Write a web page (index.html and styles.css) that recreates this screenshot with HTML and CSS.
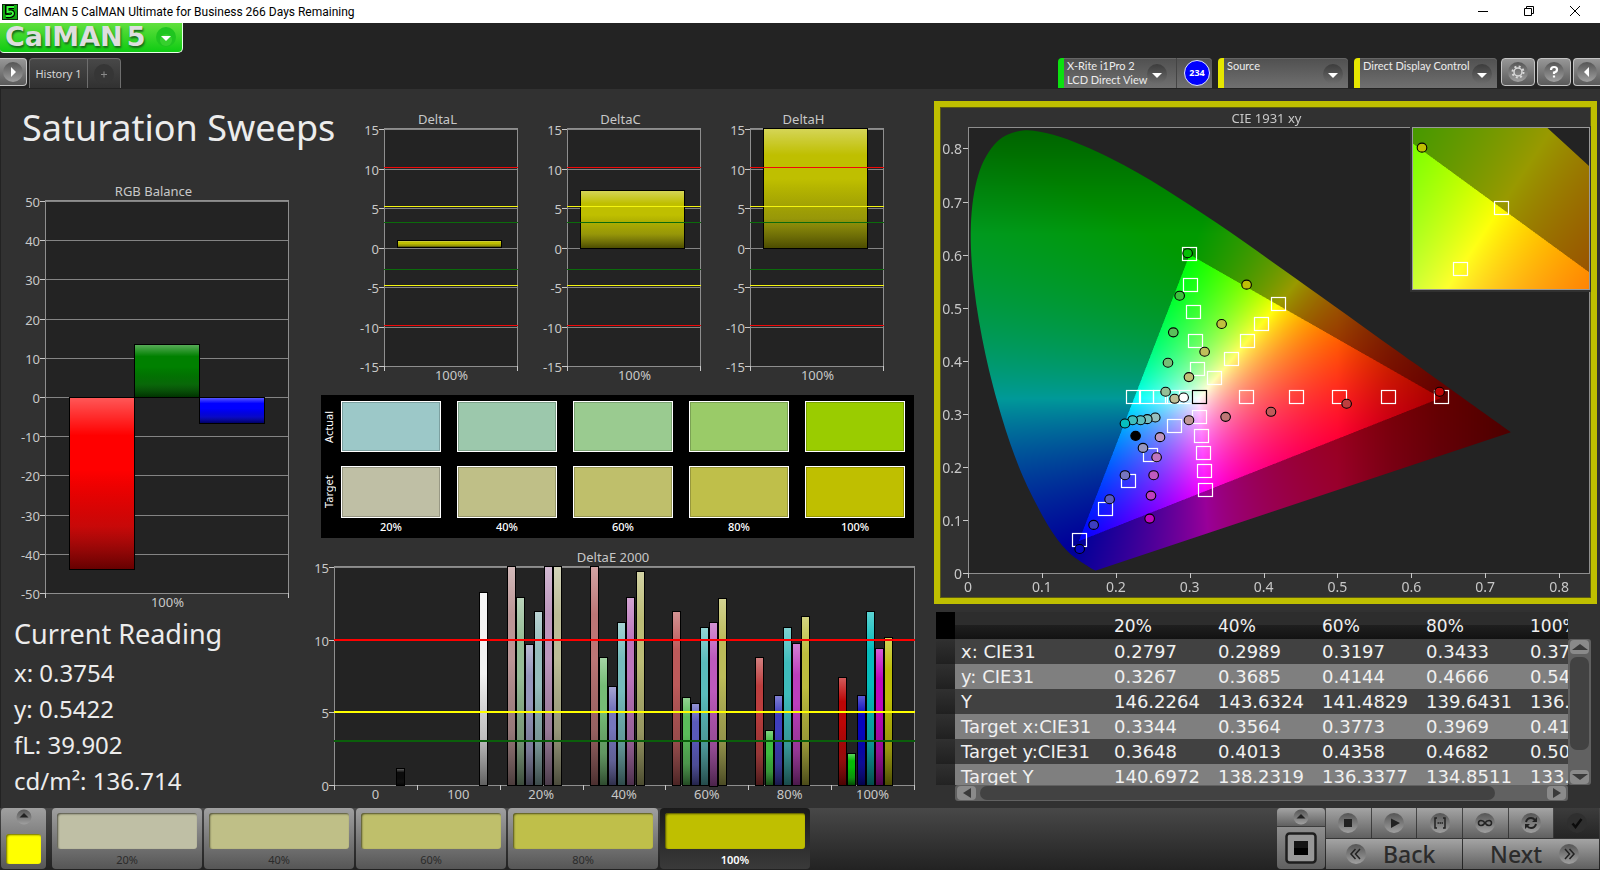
FILE: index.html
```html
<!DOCTYPE html>
<html lang="en">
<head>
<meta charset="utf-8">
<title>CalMAN 5</title>
<link rel="stylesheet" href="styles.css">
</head>
<body>
<header class="titlebar">
  <svg class="app-icon" width="16" height="16" viewBox="0 0 16 16"><rect width="16" height="16" fill="#0c2a0c"/><rect x="1" y="1" width="14" height="14" fill="#12a912"/><path d="M12 3H5v5q6-2 6 1.500T4 12" fill="none" stroke="#000" stroke-width="4"/><path d="M12 3H5.500v5q5.500-1.500 5.500 1.500T4 12" fill="none" stroke="#3dff3d" stroke-width="2"/></svg>
  <span class="app-title">CalMAN 5 CalMAN Ultimate for Business 266 Days Remaining</span>
  <div class="window-buttons">
    <button type="button" aria-label="Minimize"><svg width="10" height="10"><path d="M0 5.500h10" stroke="#000"/></svg></button>
    <button type="button" aria-label="Restore"><svg width="10" height="10" fill="none" stroke="#000"><path d="M.5 2.500h7v7h-7zM2.500 2.500v-2h7v7h-2"/></svg></button>
    <button type="button" aria-label="Close"><svg width="10" height="10"><path d="M0 0l10 10M10 0L0 10" stroke="#000"/></svg></button>
  </div>
</header>

<div class="toolbar">
  <button type="button" class="logo"><span>CalMAN</span><span>5</span>
    <svg width="20" height="20" viewBox="0 0 20 20"><circle cx="10" cy="10" r="10" fill="#1fc51f"/><circle cx="10" cy="13" r="6" fill="#4ddb3c" opacity=".5"/><path d="M5 9h10l-5 5z" fill="#fff"/></svg>
  </button>
  <div class="toolbar-row">
    <button type="button" class="chip chip-left" aria-label="Expand"><svg width="20" height="20" viewBox="0 0 20 20"><use href="#disc"/><path d="M8 5l5 5-5 5z" fill="#fff"/></svg></button>
    <div class="tabs">
      <button type="button" class="tab">History 1</button>
      <button type="button" class="tab tab-add" aria-label="Add history"><svg width="20" height="20" viewBox="0 0 20 20"><circle cx="10" cy="10" r="10" fill="#363636"/><path d="M7 10.500h6M10 7.500v6" stroke="#8a8a8a"/></svg></button>
    </div>
    <div class="devices">
      <div class="device device-meter green">
        <button type="button" class="device-name"><span>X-Rite i1Pro 2<br>LCD Direct View</span><svg width="20" height="20" viewBox="0 0 20 20"><use href="#disc-dark"/><path d="M5 9h10l-5 5z" fill="#fff"/></svg></button>
        <span class="badge">234</span>
      </div>
      <div class="device device-source"><button type="button" class="device-name"><span>Source</span><svg width="20" height="20" viewBox="0 0 20 20"><use href="#disc-dark"/><path d="M5 9h10l-5 5z" fill="#fff"/></svg></button></div>
      <div class="device device-display"><button type="button" class="device-name"><span>Direct Display Control</span><svg width="20" height="20" viewBox="0 0 20 20"><use href="#disc-dark"/><path d="M5 9h10l-5 5z" fill="#fff"/></svg></button></div>
      <button type="button" class="chip" aria-label="Settings"><svg width="20" height="20" viewBox="0 0 20 20"><use href="#disc"/><circle cx="10" cy="10" r="4" fill="none" stroke="#d8d8d8" stroke-width="1.500"/><circle cx="10" cy="10" r="5.500" fill="none" stroke="#d8d8d8" stroke-width="2" stroke-dasharray="2 2.320"/></svg></button>
      <button type="button" class="chip" aria-label="Help"><svg width="20" height="20" viewBox="0 0 20 20"><use href="#disc"/><path d="M7 8q0-3 3-3t3 2.500-3 3v1.500M10 13.500v2" fill="none" stroke="#fff" stroke-width="2.200"/></svg></button>
      <button type="button" class="chip chip-right" aria-label="Collapse"><svg width="20" height="20" viewBox="0 0 20 20"><use href="#disc"/><path d="M12 5l-5 5 5 5z" fill="#fff"/></svg></button>
    </div>
  </div>
</div>

<main class="workspace">
  <section class="col-left">
    <h1>Saturation Sweeps</h1>
    <div class="chart chart-rgb" id="rgb"></div>
    <h2>Current Reading</h2>
    <ul class="readings">
      <li>x: 0.3754</li><li>y: 0.5422</li><li>fL: 39.902</li><li>cd/m²: 136.714</li>
    </ul>
  </section>

  <section class="col-mid">
    <div class="delta-row">
      <div class="chart" id="deltaL"></div><div class="chart" id="deltaC"></div><div class="chart" id="deltaH"></div>
    </div>
    <div class="swatches">
      <span class="side">Actual</span><i class="a1"></i><i class="a2"></i><i class="a3"></i><i class="a4"></i><i class="a5"></i>
      <span class="side">Target</span><i class="t1"></i><i class="t2"></i><i class="t3"></i><i class="t4"></i><i class="t5"></i>
      <span></span><b>20%</b><b>40%</b><b>60%</b><b>80%</b><b>100%</b>
    </div>
    <div class="chart chart-de" id="deltaE"></div>
  </section>

  <section class="col-right">
    <div class="cie"><canvas id="gamut"></canvas><div class="chart chart-cie" id="cie"></div></div>
    <div class="data">
      <div class="data-clip">
        <table>
          <colgroup><col class="c-mark"><col class="c-label"><col><col><col><col><col></colgroup>
          <thead><tr><td></td><td></td><th scope="col">20%</th><th scope="col">40%</th><th scope="col">60%</th><th scope="col">80%</th><th scope="col">100%</th></tr></thead>
          <tbody>
            <tr><td></td><th scope="row">x: CIE31</th><td>0.2797</td><td>0.2989</td><td>0.3197</td><td>0.3433</td><td>0.3754</td></tr>
            <tr><td></td><th scope="row">y: CIE31</th><td>0.3267</td><td>0.3685</td><td>0.4144</td><td>0.4666</td><td>0.5422</td></tr>
            <tr><td></td><th scope="row">Y</th><td>146.2264</td><td>143.6324</td><td>141.4829</td><td>139.6431</td><td>136.7140</td></tr>
            <tr><td></td><th scope="row">Target x:CIE31</th><td>0.3344</td><td>0.3564</td><td>0.3773</td><td>0.3969</td><td>0.4193</td></tr>
            <tr><td></td><th scope="row">Target y:CIE31</th><td>0.3648</td><td>0.4013</td><td>0.4358</td><td>0.4682</td><td>0.5053</td></tr>
            <tr><td></td><th scope="row">Target Y</th><td>140.6972</td><td>138.2319</td><td>136.3377</td><td>134.8511</td><td>133.2000</td></tr>
          </tbody>
        </table>
      </div>
      <div class="vbar">
        <button type="button" aria-label="Scroll up"><svg width="16" height="6"><path d="M0 6l8-6 8 6z" fill="#3a3a3a"/></svg></button>
        <div class="thumb"></div>
        <button type="button" aria-label="Scroll down"><svg width="16" height="6"><path d="M0 0l8 6 8-6z" fill="#3a3a3a"/></svg></button>
      </div>
      <div class="hbar">
        <button type="button" aria-label="Scroll left"><svg width="8" height="10"><path d="M8 0v10L0 5z" fill="#3a3a3a"/></svg></button>
        <div class="thumb"></div>
        <button type="button" aria-label="Scroll right"><svg width="8" height="10"><path d="M0 0v10l8-5z" fill="#3a3a3a"/></svg></button>
      </div>
    </div>
  </section>
</main>

<footer class="dock">
  <button type="button" class="current" aria-label="Current pattern"><svg width="16" height="16" viewBox="0 0 16 16"><use href="#disc-small"/><path d="M3.500 8.500h9L8 4z" fill="#222"/></svg><i></i></button>
  <div class="tiles">
    <button type="button" class="tile"><i class="t1"></i>20%</button>
    <button type="button" class="tile"><i class="t2"></i>40%</button>
    <button type="button" class="tile"><i class="t3"></i>60%</button>
    <button type="button" class="tile"><i class="t4"></i>80%</button>
    <button type="button" class="tile active"><i class="t5"></i>100%</button>
  </div>
  <div class="controls">
    <div class="source-col">
      <button type="button" aria-label="Show patterns"><svg width="16" height="16" viewBox="0 0 16 16"><use href="#disc-small"/><path d="M3.500 9.500h9L8 5z" fill="#222"/></svg></button>
      <button type="button" class="pattern" aria-label="Pattern window"><svg width="32" height="32" viewBox="0 0 32 32"><rect x="1.500" y="1.500" width="29" height="29" rx="3" fill="#979797" stroke="#1e1e1e" stroke-width="2.500"/><path d="M9 9h14v14H9z" fill="#000"/><path d="M9 9h14v7H9z" fill="#151515"/></svg></button>
    </div>
    <div class="transport">
      <button type="button" aria-label="Stop"><svg width="20" height="20" viewBox="0 0 20 20"><use href="#disc"/><path d="M6 6h8v8H6z" fill="#222"/></svg></button>
      <button type="button" aria-label="Play"><svg width="20" height="20" viewBox="0 0 20 20"><use href="#disc"/><path d="M7 5.500l9 4.500-9 5z" fill="#222"/></svg></button>
      <button type="button" aria-label="Read series"><svg width="20" height="20" viewBox="0 0 20 20"><use href="#disc"/><path d="M7 5H5v10h2M13 5h2v10h-2M7.500 10h1.500M9.500 10h1.500M11.500 10h1.500" fill="none" stroke="#222" stroke-width="1.500"/></svg></button>
      <button type="button" aria-label="Read continuously"><svg width="20" height="20" viewBox="0 0 20 20"><use href="#disc"/><path d="M10 10C8 7 3.500 6.500 3.500 10s4.500 3 6.500 0 6.500-3.500 6.500 0-4.500 3-6.500 0z" fill="none" stroke="#222" stroke-width="1.600"/></svg></button>
      <button type="button" aria-label="Repeat"><svg width="20" height="20" viewBox="0 0 20 20"><use href="#disc"/><path d="M5 9q1-4 5-4 2.500 0 4 2M15 11q-1 4-5 4-2.500 0-4-2" fill="none" stroke="#222" stroke-width="2"/><path d="M16 4v5h-5zM4 16v-5h5z" fill="#222"/></svg></button>
      <button type="button" class="off" aria-label="Accept"><svg width="20" height="20" viewBox="0 0 20 20"><circle cx="10" cy="10" r="10" fill="#2f2f2f"/><path d="M5.500 10.500l3 3.500 6-8" fill="none" stroke="#0c0c0c" stroke-width="2.500"/></svg></button>
      <button type="button" class="nav"><svg width="20" height="20" viewBox="0 0 20 20"><use href="#disc"/><path d="M9.500 5l-4.500 5 4.500 5M14 5l-4.500 5 4.500 5" fill="none" stroke="#222" stroke-width="1.500"/></svg>Back</button>
      <button type="button" class="nav nav-next">Next<svg width="20" height="20" viewBox="0 0 20 20"><use href="#disc"/><path d="M6 5l4.500 5L6 15M10.500 5l4.500 5-4.500 5" fill="none" stroke="#222" stroke-width="1.500"/></svg></button>
    </div>
  </div>
</footer>

<svg class="defs" aria-hidden="true">
  <defs>
    <linearGradient id="g-disc" x2="0" y2="1"><stop offset="0" stop-color="#555"/><stop offset="1" stop-color="#a0a0a0"/></linearGradient>
    <linearGradient id="g-dark" x2="0" y2="1"><stop offset="0" stop-color="#3c3c3c"/><stop offset="1" stop-color="#6c6c6c"/></linearGradient>
    <linearGradient id="gloss" x2="0" y2="1"><stop offset="0" stop-color="#fff" stop-opacity=".34"/><stop offset=".22" stop-color="#fff" stop-opacity="0"/><stop offset=".42" stop-color="#000" stop-opacity="0"/><stop offset=".75" stop-color="#222" stop-opacity=".25"/><stop offset="1" stop-color="#000" stop-opacity=".6"/></linearGradient>
    <circle id="disc" cx="10" cy="10" r="10" fill="url(#g-disc)"/>
    <circle id="disc-dark" cx="10" cy="10" r="10" fill="url(#g-dark)"/>
    <circle id="disc-small" cx="8" cy="8" r="7.500" fill="url(#g-disc)"/>
  </defs>
</svg>
<script src="charts.js"></script>
</body>
</html>
```

FILE: styles.css
```css
* { box-sizing: border-box; }
body {
  margin: 0;
  min-height: 100vh;
  display: flex;
  flex-direction: column;
  background: #232323;
  color: #ececec;
  font-family: "Noto Sans", "Open Sans", sans-serif;
  overflow-x: hidden;
}
button {
  margin: 0;
  padding: 0;
  border: 0;
  background: none;
  color: inherit;
  font: inherit;
  cursor: pointer;
}
svg, canvas { display: block; }
.defs { position: absolute; width: 0; height: 0; }

/* window title bar */
.titlebar {
  height: 23px;
  display: flex;
  align-items: center;
  background: #fff;
  color: #000;
  padding-left: 2px;
}
.app-title {
  margin-left: 6px;
  font: 12px/16px Roboto, sans-serif;
}
.window-buttons { margin: 0 2px 2px auto; display: flex; }
.window-buttons button { width: 46px; height: 20px; display: grid; place-items: center; }

/* logo, tabs and devices */
.toolbar { height: 66px; }
.logo {
  width: 183px;
  height: 30px;
  display: flex;
  align-items: center;
  padding: 0 6px 2px 5px;
  border: solid #e8ffe8;
  border-width: 0 1px 1px 0;
  border-radius: 0 0 5px 4px;
  background: linear-gradient(#62e03e, #0ecb12);
  color: #dedede;
  font: bold 27px/26px "DejaVu Sans", sans-serif;
  text-shadow: 1px 2px 2px #17691a;
}
.logo span + span { margin-left: 4px; }
.logo svg { margin-left: auto; }
.toolbar-row {
  display: flex;
  align-items: flex-start;
  margin-top: 5px;
  height: 31px;
  overflow: hidden;
}
.chip {
  width: 34px;
  height: 28px;
  display: grid;
  place-items: center;
  border: 1px solid #c4c4c4;
  border-radius: 4px;
  background: linear-gradient(#979797, #5a5a5a);
}
.chip-left { width: 27px; border-left: 0; border-radius: 0 4px 4px 0; }
.chip-right { width: 27px; border-right: 0; border-radius: 4px 0 0 4px; }
.tabs {
  display: flex;
  margin-left: 2px;
  height: 30px;
  border: solid #6e6e6e;
  border-width: 1px 1px 0;
  border-radius: 4px 4px 0 0;
  background: linear-gradient(#484848, #313131);
}
.tab {
  width: 58px;
  font-size: 11px;
  color: #d6d6d6;
  border-right: 1px solid #6e6e6e;
}
.tab-add { width: 32px; border-right: 0; display: grid; place-items: center; }
.devices { margin-left: auto; display: flex; gap: 2px; }
.device {
  height: 30px;
  display: flex;
  margin-right: 4px;
  border-left: 6px solid #e6e600;
  border-radius: 4px 4px 0 0;
  background: linear-gradient(#505050, #707070);
  box-shadow: inset 0 1px #666;
}
.device.green { border-left-color: #0ce010; }
.device-meter { width: 154px; }
.device-source { width: 130px; }
.device-display { width: 143px; margin-right: 2px; }
.device-name {
  flex: 1;
  display: flex;
  justify-content: space-between;
  padding: 1px 9px 0 3px;
  font: 11px/14px Lato, sans-serif;
  text-align: left;
  white-space: nowrap;
}
.device-display .device-name, .device-source .device-name { padding-right: 5px; }
.device-name svg { align-self: center; margin-left: -8px; }
.badge {
  width: 26px;
  height: 26px;
  margin: 2px;
  border: 1px solid #dfe4ff;
  border-radius: 50%;
  background: #0000fe;
  color: #fff;
  font: bold 9px/24px "Open Sans", sans-serif;
  text-align: center;
}
.device-meter .device-name { border-right: 1px solid #444; margin-right: 5px; }

/* workspace */
.workspace {
  flex: 1;
  display: grid;
  grid-template-columns: 313fr 607fr 680fr;
  background: #313131;
  box-shadow: inset 1px 0 #222;
}
.workspace > section { min-width: 0; }
.chart { position: relative; min-width: 0; }
.chart svg { width: 100%; height: 100%; font-size: 13px; fill: #c8c8c8; overflow: visible; }
.chart .axis-cie { font-size: 14px; }

.col-left h1 {
  margin: 0 0 32px;
  padding: 16px 0 0 22px;
  font-size: 36px;
  line-height: 46px;
  font-weight: 400;
  white-space: nowrap;
}
.chart-rgb { height: 430px; }
.col-left h2 {
  margin: 0;
  padding-left: 14px;
  font-size: 27px;
  line-height: 42px;
  font-weight: 400;
}
.readings {
  margin: 0;
  padding: 0 0 0 14px;
  list-style: none;
  font-size: 24px;
  line-height: 36px;
}

.col-mid { padding-top: 20px; }
.delta-row {
  display: grid;
  grid-template-columns: repeat(3, 1fr);
  height: 277px;
  margin: 0 25px 0 33px;
}
.swatches {
  display: grid;
  grid-template-columns: 4px repeat(5, 1fr);
  grid-template-rows: 51px 52px 18px;
  column-gap: 16px;
  row-gap: 14px;
  margin: 9px 6px 9px 8px;
  padding: 6px 9px 0 0;
  height: 143px;
  background: #000;
  color: #fff;
  font-size: 11px;
}
.swatches i { border: 1px solid #fff; box-shadow: inset 0 0 0 1px rgba(0, 0, 0, .2); }
.swatches b { font-weight: 500; line-height: 16px; text-align: center; margin-top: -13px; }
.side {
  writing-mode: vertical-rl;
  transform: rotate(180deg);
  text-align: center;
  width: 12px;
  margin-left: 2px;
  line-height: 12px;
}
.a1 { background: #9cc8c8; }
.a2 { background: #9cc8ac; }
.a3 { background: #9acb90; }
.a4 { background: #9acb68; }
.a5 { background: #9acc00; }
.t1 { background: #bfbfa5; }
.t2 { background: #bfbf87; }
.t3 { background: #bfbf6b; }
.t4 { background: #bfbf4a; }
.t5 { background: #bfbf00; }
.chart-de { height: 254px; }

.cie {
  position: relative;
  height: 503px;
  margin: 12px 3px 8px 14px;
  border: 6px solid #bfbf00;
  box-shadow: inset 0 0 0 1px #5c5c12;
}
.cie canvas { position: absolute; left: 0; top: 0; }
.chart-cie { height: 491px; }

/* readings table */
.data {
  display: grid;
  grid-template-columns: 1fr 23px;
  margin: 0 9px 7px 16px;
}
.data-clip { height: 173px; overflow: hidden; }
table {
  width: 692px;
  table-layout: fixed;
  border-collapse: collapse;
  font: 18px/25px "DejaVu Sans", sans-serif;
  color: #f0f0f0;
}
.c-mark { width: 19px; }
.c-label { width: 153px; }
th, td { padding: 0 0 0 6px; height: 25px; font-weight: 400; text-align: left; white-space: nowrap; }
thead th, thead td {
  height: 27px;
  padding-top: 2px;
  font-size: 17px;
  background: linear-gradient(#2d2d2d 48%, #1f1f1f 48%, #121212);
}
thead td:first-child { background: #000; }
tbody tr { background: #414141; }
tbody tr:nth-child(even) { background: #7f7f7f; }
tbody td:first-child { background: linear-gradient(#303030, #202020); }
.vbar, .hbar { display: flex; background: #616161; border-radius: 3px; }
.vbar { flex-direction: column; align-items: center; margin-top: 27px; padding: 1px; }
.vbar button, .hbar button {
  display: grid;
  place-items: center;
  width: 19px;
  height: 14px;
  flex: none;
  border-radius: 4px;
  background: #8a8a8a;
}
.vbar .thumb { width: 19px; height: 93px; margin: 3px 0 auto; border-radius: 7px; background: #424242; }
.hbar { height: 16px; margin-left: 19px; padding: 1px 2px; }
.hbar .thumb { flex: 516; margin: 0 52px 0 4px; border-radius: 7px; background: #424242; }

/* bottom dock */
.dock {
  height: 62px;
  display: flex;
  padding: 0 1px 1px;
  background: linear-gradient(#484848, #222);
}
.dock i { display: block; border-radius: 3px; box-shadow: inset 1px 1px 2px rgba(0, 0, 0, .6); }
.current, .tile {
  display: flex;
  flex-direction: column;
  align-items: center;
  border-radius: 4px;
  background: linear-gradient(#a0a0a0, #565656);
}
.current { width: 45px; padding-top: 1px; }
.current i { width: 35px; height: 30px; margin-top: 9px; background: #ff0; }
.tiles { display: flex; gap: 2px; margin-left: 6px; }
.tile {
  width: 150px;
  padding: 5px 5px 0;
  color: #2b2b2b;
  font: 11px/16px "Noto Sans", sans-serif;
}
.tile i { width: 100%; height: 36px; margin-bottom: 3px; }
.tile.active { background: linear-gradient(#1a1a1a, #3a3a3a); color: #fff; font-weight: 600; }
.controls { margin-left: auto; display: flex; gap: 1px; }
.controls button { background: linear-gradient(#a4a4a4, #606060); display: grid; place-items: center; }
.source-col { width: 48px; display: grid; grid-template-rows: 18px 1fr; gap: 1px; border-radius: 4px; overflow: hidden; }
.controls .pattern { background: linear-gradient(#8e8e8e, #606060); }
.transport {
  width: 273px;
  display: grid;
  grid-template-columns: repeat(6, 1fr);
  grid-template-rows: 30px 30px;
  gap: 1px;
}
.controls .off { background: linear-gradient(#3c3c3c, #252525); }
.controls .nav {
  grid-column: span 3;
  display: flex;
  align-items: center;
  gap: 17px;
  padding: 0 20px;
  color: #2b2b2b;
  font: 500 23px/28px "Noto Sans", sans-serif;
}
.controls .nav-next { justify-content: flex-end; }
```

FILE: charts.js
```js
const NS = 'http://www.w3.org/2000/svg';

function surface(id) {
  const host = document.getElementById(id);
  host.textContent = '';
  const svg = document.createElementNS(NS, 'svg');
  host.appendChild(svg);
  return { svg, w: host.clientWidth, h: host.clientHeight };
}
function add(parent, tag, attrs, text) {
  const el = document.createElementNS(NS, tag);
  for (const k in attrs) el.setAttribute(k, attrs[k]);
  if (text !== undefined) el.textContent = text;
  parent.appendChild(el);
  return el;
}
function hline(svg, x1, x2, y, color, width) {
  add(svg, 'path', { d: `M${x1} ${y}H${x2}`, stroke: color, 'stroke-width': width || 1, fill: 'none' });
}
const snap = v => Math.round(v) + 0.5;

function barChart(id, o) {
  const { svg, w, h } = surface(id);
  const L = o.left, R = w - o.right, T = o.top, B = h - o.bottom;
  const sy = v => B - (v - o.min) / (o.max - o.min) * (B - T);
  add(svg, 'rect', { x: L, y: T - 1, width: R - L, height: B - T + 1, fill: '#232323' });
  for (let v = o.min; v <= o.max; v += o.step) {
    const y = snap(sy(v));
    hline(svg, L - 5, L, y, '#c8c8c8');
    hline(svg, L, R, y, '#848484');
    add(svg, 'text', { x: L - 5, y: y + 5, 'text-anchor': 'end' }, v);
  }
  add(svg, 'rect', { x: L + .5, y: T - .5, width: Math.round(R - L), height: B - T + 1, fill: 'none', stroke: '#8e8e8e' });
  const band = (R - L) / o.groups.length;
  o.groups.forEach((g, i) => {
    g.bars.forEach(b => {
      const x = Math.round(L + band * (i + b.x)), bw = Math.round(band * o.bar);
      const y0 = sy(0), y1 = Math.max(T - 1, sy(b.v));
      const y = Math.round(Math.min(y0, y1)), bh = Math.round(Math.abs(y0 - y1));
      add(svg, 'rect', { x: x + .5, y: y + .5, width: bw, height: bh, fill: b.c, stroke: '#000' });
      add(svg, 'rect', { x: x + 1, y: y + 1, width: bw - 1, height: bh - 1, fill: 'url(#gloss)' });
    });
    add(svg, 'text', { x: L + band * (i + .5) + o.shift, y: B + 14, 'text-anchor': 'middle' }, g.name);
  });
  for (let i = 0; i <= o.groups.length; i++)
    add(svg, 'path', { d: `M${snap(L + band * i)} ${B}v5`, stroke: '#c8c8c8' });
  (o.limits || []).forEach(([v, c]) => hline(svg, L, R + 1, Math.round(sy(v)) - (o.limitWidth === 1 ? 1.5 : 0), c, o.limitWidth));
  add(svg, 'text', { x: o.titleX ? o.titleX(L, R) : (L + R) / 2, y: T - 5, 'text-anchor': 'middle' }, o.title);
}

const deltaLimits = [[10, '#f00808'], [5, '#f4f410'], [3, '#0b6b0b'], [-3, '#0b6b0b'], [-5, '#f4f410'], [-10, '#f00808']];
function deltaChart(id, title, v) {
  barChart(id, { title, left: 38, right: 12, top: 20, bottom: 20, min: -15, max: 15, step: 5, bar: .78, limitWidth: 1, shift: 1,
    limits: deltaLimits, titleX: (l, r) => (l + r) / 2 - 13, groups: [{ name: '100%', bars: [{ x: .1, v, c: '#bfbf00' }] }] });
}

const weak = [150, 118, 90, 62, 6];
const hues = ['100', '010', '001', '011', '101', '110'];
function shade(hue, level, high) {
  return 'rgb(' + [...hue].map(c => c === '1' ? high || 188 : weak[level]).join() + ')';
}
const errors = [
  [16, 12.97, 9.67, 12, 16, 16],
  [16, 8.84, 6.78, 11.2, 12.97, 14.7],
  [11.94, 6.07, 5.66, 10.84, 11.25, 12.9],
  [8.84, 3.8, 6.16, 10.9, 9.8, 11.6],
  [7.4, 2.17, 6.16, 12, 9.4, 10.2]
];
const slot = k => .085 + .111 * k;

const locus = [[.1741,.005],[.1726,.0048],[.1689,.0069],[.1644,.0109],[.1566,.0177],[.144,.0297],[.1355,.0399],[.1241,.0578],[.1096,.0868],[.0913,.1327],[.0687,.2007],[.0454,.295],[.0235,.4127],[.0082,.5384],[.0039,.6548],[.0139,.7502],[.0389,.812],[.0743,.8338],[.1142,.8262],[.1547,.8059],[.1929,.7816],[.2296,.7543],[.2658,.7243],[.3016,.6923],[.3373,.6589],[.3731,.6245],[.4087,.5896],[.4441,.5547],[.4788,.5202],[.5125,.4866],[.5448,.4544],[.5752,.4242],[.6029,.3965],[.627,.3725],[.6482,.3514],[.6658,.334],[.6915,.3083],[.714,.2859],[.7347,.2653]];

const targets = [[.299,.602],[.301,.543],[.3045,.492],[.3067,.437],[.31,.385],[.3333,.3673],[.3559,.4025],[.3771,.437],[.3965,.4686],[.4195,.5075],[.2233,.3308],[.2413,.3308],[.2594,.3308],[.2765,.3308],[.2945,.3308],[.3757,.3308],[.4443,.3308],[.5025,.3308],[.5679,.3308],[.6401,.3308],[.313,.2943],[.3153,.2585],[.3176,.2264],[.3189,.1925],[.3203,.1566],[.2792,.2767],[.2463,.2226],[.2165,.173],[.1849,.1208],[.1498,.0616]];
const measured = {
  '010': [[.2661,.3415],[.2693,.3962],[.2765,.4535],[.2851,.5226],[.2959,.6025]],
  '110': [[.2783,.3283],[.2977,.3692],[.3189,.417],[.3419,.4692],[.3757,.5434]],
  '011': [[.2521,.2931],[.2413,.2899],[.2323,.288],[.2215,.288],[.2111,.2818]],
  '100': [[.2977,.288],[.3473,.2943],[.4087,.3038],[.5111,.3189],[.6369,.3415]],
  '101': [[.2585,.256],[.2539,.2182],[.2499,.1843],[.2463,.1459],[.2445,.1025]],
  '001': [[.2355,.2358],[.2111,.1843],[.1903,.139],[.1687,.0906],[.1498,.0453]]
};

function ramp(v, stops) {
  for (let i = 1; i < stops.length; i++) {
    if (v <= stops[i][0]) {
      const [a, fa] = stops[i - 1], [b, fb] = stops[i];
      return v <= a ? fa : fa + (fb - fa) * (v - a) / (b - a);
    }
  }
  return stops[stops.length - 1][1];
}

/* chromaticity to display colour; out-of-gamut colours are clipped and dimmed */
function chroma(x, y) {
  y = Math.max(y, .001);
  const X = x / y, Z = (1 - x - y) / y;
  const c = [3.2406 * X - 1.5372 - .4986 * Z, -.9689 * X + 1.8758 + .0415 * Z, .0557 * X - .204 + 1.057 * Z];
  const out = Math.min(...c) < 0;
  const m = Math.max(...c);
  let k = 255 / m * (out ? .6 : 1);
  k *= ramp(x, [[.5, 1], [.57, .8], [.64, .65], [.735, .5]]);
  k *= ramp(y, [[.64, 1], [.84, .64]]);
  return c.map(v => Math.max(0, v) * k);
}
/* smooth closed outline: Catmull-Rom through the points, straight closing edge */
function traceLocus(ctx, pts) {
  ctx.beginPath();
  ctx.moveTo(...pts[0]);
  for (let i = 0; i < pts.length - 1; i++) {
    const a = pts[Math.max(0, i - 1)], b = pts[i], c = pts[i + 1], d = pts[Math.min(pts.length - 1, i + 2)];
    ctx.bezierCurveTo(b[0] + (c[0] - a[0]) / 6, b[1] + (c[1] - a[1]) / 6, c[0] - (d[0] - b[0]) / 6, c[1] - (d[1] - b[1]) / 6, c[0], c[1]);
  }
  ctx.closePath();
}
function paint(ctx, box, range) {
  const s = 2, w = Math.round(box.w * s), h = Math.round(box.h * s);
  const off = document.createElement('canvas');
  off.width = w; off.height = h;
  const o = off.getContext('2d'), img = o.createImageData(w, h);
  for (let j = 0, p = 0; j < h; j++) for (let i = 0; i < w; i++, p += 4) {
    const c = chroma(range.x0 + (i + .5) / w * (range.x1 - range.x0), range.y1 - (j + .5) / h * (range.y1 - range.y0));
    img.data[p] = c[0]; img.data[p + 1] = c[1]; img.data[p + 2] = c[2]; img.data[p + 3] = 255;
  }
  o.putImageData(img, 0, 0);
  ctx.save();
  ctx.fillStyle = '#232323';
  ctx.fillRect(box.x, box.y, box.w, box.h);
  ctx.beginPath(); ctx.rect(box.x, box.y, box.w, box.h); ctx.clip();
  traceLocus(ctx, locus.map(([x, y]) => [box.x + (x - range.x0) / (range.x1 - range.x0) * box.w, box.y + (range.y1 - y) / (range.y1 - range.y0) * box.h]));
  ctx.clip();
  ctx.drawImage(off, box.x, box.y, box.w, box.h);
  ctx.restore();
}

function cieChart() {
  const { svg, w, h } = surface('cie');
  const box = { x: 28, y: 20, w: w - 30, h: h - 45 };
  const range = { x0: 0, x1: .8405, y0: 0, y1: .8405 };
  const canvas = document.getElementById('gamut');
  canvas.width = w; canvas.height = h;
  const ctx = canvas.getContext('2d');
  paint(ctx, box, range);
  const px = x => box.x + x / range.x1 * box.w, py = y => box.y + box.h - y / range.y1 * box.h;
  add(svg, 'rect', { x: box.x + .5, y: box.y + .5, width: box.w, height: box.h, fill: 'none', stroke: '#8e8e8e' });
  const axis = add(svg, 'g', { class: 'axis-cie' });
  for (let i = 0; i <= 8; i++) {
    const t = i ? (i / 10).toFixed(1) : '0';
    hline(svg, box.x - 5, box.x, snap(py(i / 10)), '#c8c8c8');
    add(svg, 'path', { d: `M${snap(px(i / 10))} ${box.y + box.h}v5`, stroke: '#c8c8c8' });
    add(axis, 'text', { x: box.x - 6, y: py(i / 10) + 6, 'text-anchor': 'end' }, t);
    add(axis, 'text', { x: px(i / 10), y: box.y + box.h + 19, 'text-anchor': 'middle' }, t);
  }
  add(svg, 'text', { x: w / 2 + 1, y: 16, 'text-anchor': 'middle' }, 'CIE 1931 xy');
  const square = (x, y, c) => add(svg, 'rect', { x: Math.round(x) - 6.5, y: Math.round(y) - 6.5, width: 14, height: 13, fill: 'none', stroke: c || '#fff', 'stroke-width': 1.2 });
  const dot = (x, y, c) => add(svg, 'ellipse', { cx: x + 1, cy: y, rx: 4.8, ry: 4.5, fill: c, stroke: '#000', 'stroke-width': 1.1 });
  targets.forEach(([x, y]) => square(px(x), py(y)));
  square(px(.3121), py(.3308), '#000');
  dot(px(.2255), py(.2585), '#000');
  for (const hue in measured) measured[hue].forEach(([x, y], i) => dot(px(x), py(y), shade(hue, i, 191)));
  dot(px(.2905), py(.3308), '#fff');

  const zoom = { x: box.x + box.w - 177, y: box.y, w: 177, h: 162 };
  const zr = { x0: .3701, x1: .4685, y0: .456, y1: .554 };
  ctx.fillStyle = '#313131';
  ctx.fillRect(zoom.x - 2, zoom.y - 1, zoom.w + 5, zoom.h + 4);
  paint(ctx, zoom, zr);
  add(svg, 'path', { d: `M${zoom.x - 2} ${zoom.y + .5}h2M${box.x + box.w + .5} ${zoom.y + zoom.h + 1}v2`, stroke: '#313131' });
  add(svg, 'rect', { x: zoom.x + .5, y: zoom.y + .5, width: zoom.w, height: zoom.h, fill: 'none', stroke: '#9a9a9a' });
  const zx = x => zoom.x + (x - zr.x0) / (zr.x1 - zr.x0) * zoom.w, zy = y => zoom.y + (zr.y1 - y) / (zr.y1 - zr.y0) * zoom.h;
  square(zx(.4193), zy(.505));
  square(zx(.3969), zy(.4678));
  dot(zx(.3751), zy(.5415), '#bfbf00');
}

function draw() {
  barChart('rgb', { title: 'RGB Balance', left: 45, right: 25, top: 18, bottom: 20, min: -50, max: 50, step: 10, bar: .266, shift: 1,
    titleX: (l, r) => (l + r) / 2 - 13,
    groups: [{ name: '100%', bars: [{ x: .1, v: -43.9, c: '#f00' }, { x: .368, v: 13.6, c: '#008000' }, { x: .634, v: -6.6, c: '#00f' }] }] });
  deltaChart('deltaL', 'DeltaL', .9);
  deltaChart('deltaC', 'DeltaC', 7.3);
  deltaChart('deltaH', 'DeltaH', 20);
  const groups = [
    { name: '0', bars: [{ x: slot(6), v: 1.2, c: '#0c0c0c' }] },
    { name: '100', bars: [{ x: slot(6), v: 13.25, c: '#f3f3f3' }] }
  ];
  errors.forEach((row, i) => groups.push({ name: (i + 1) * 20 + '%', bars: row.map((v, k) => ({ x: slot(k), v, c: shade(hues[k], i) })) }));
  barChart('deltaE', { title: 'DeltaE 2000', left: 21, right: 6, top: 20, bottom: 16, min: 0, max: 15, step: 5, bar: .1, limitWidth: 2, shift: 0,
    titleX: (l, r) => (l + r) / 2 - 11, limits: [[10, '#f00'], [5, '#ff0'], [3, '#0b5f0b']], groups });
  cieChart();
}
draw();
addEventListener('resize', draw);
```
